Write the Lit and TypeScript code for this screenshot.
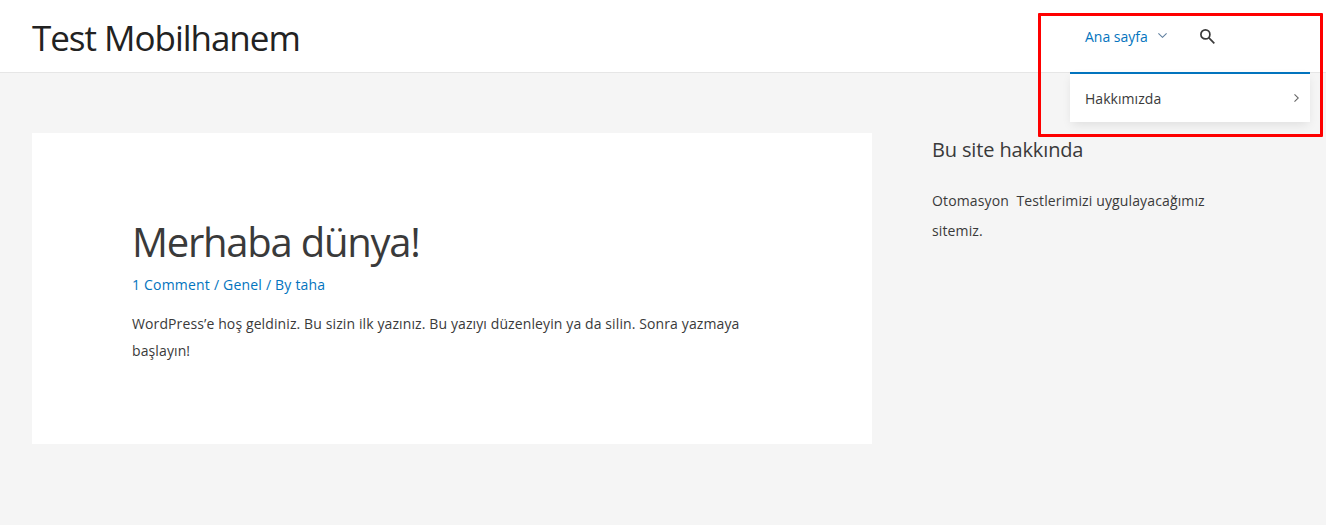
import { LitElement, html, css } from "lit";
import { customElement } from "lit/decorators.js";

@customElement("app-root")
export class AppRoot extends LitElement {
  static styles = css`
    :host { display: block; width: 1326px; height: 525px; position: relative; overflow: hidden; background: #f5f5f5; font-family: "Open Sans", "Noto Sans", sans-serif; color: #3a3a3a; }
    a { color: #0274be; text-decoration: none; }
    .header { height: 72px; background: #fff; border-bottom: 1px solid #e6e6e6; display: flex; justify-content: space-between; padding: 0 16px 0 32px; position: relative; }
    .title { font-size: 35px; line-height: 76px; color: #222; letter-spacing: -1.03px; }
    .nav { display: flex; width: 240px; height: 72px; position: relative; }
    .menu { width: 240px; position: relative; }
    .home { display: flex; align-items: center; gap: 10px; padding-left: 15px; height: 72px; box-sizing: border-box; font-size: 14px; letter-spacing: 0; }
    .home svg { margin-top: -1px; }
    .search { position: absolute; left: 130px; top: 29px; line-height: 0; }
    .dropdown { position: absolute; left: 0; top: 72px; width: 240px; height: 50px; box-sizing: border-box; background: #fff; border-top: 2px solid #0274be; box-shadow: 0 4px 10px -2px rgba(0,0,0,.1); display: flex; align-items: center; justify-content: space-between; padding: 0 11px 0 15px; font-size: 14px; letter-spacing: 0.05px; z-index: 2; }
    .main { display: flex; padding: 60px 0 0 32px; gap: 60px; }
    .card { width: 840px; height: 311px; background: #fff; box-sizing: border-box; padding: 83px 100px 0 100px; }
    h1 { margin: 0; font-weight: 400; font-size: 40px; line-height: 52px; letter-spacing: -1.24px; color: #3a3a3a; }
    .meta { font-size: 14px; line-height: 20px; margin-top: 7px; letter-spacing: 0.2px; color: #0274be; }
    .body { font-size: 14px; line-height: 27px; margin-top: 15px; letter-spacing: 0.11px; width: 640px; }
    .side { width: 300px; }
    h2 { margin: 4px 0 0; font-weight: 400; font-size: 20px; line-height: 26px; letter-spacing: -0.14px; color: #3a3a3a; }
    .side p { margin: 23px 0 0; font-size: 14px; line-height: 30px; width: 290px; letter-spacing: 0.13px; white-space: pre-wrap; }
    .mark { position: absolute; left: 1038px; top: 13px; width: 285px; height: 124px; box-sizing: border-box; border: 3px solid #fe0000; border-radius: 1px; pointer-events: none; z-index: 5; }
  `;

  render() {
    return html`
      <div class="header">
        <div class="title">Test Mobilhanem</div>
        <div class="nav">
          <div class="menu">
            <a class="home">Ana sayfa<svg width="9" height="5" viewBox="0 0 9 5" fill="none" stroke="#5f7f9f" stroke-width="1.100"><path d="M.4.400 4.500 4.300 8.600.400"/></svg></a>
            <div class="search">
              <svg width="15" height="15" viewBox="0 0 15 15" fill="none" stroke="#3a3a3a" stroke-width="1.700"><circle cx="5.400" cy="5.400" r="4.500"/><path d="m8.700 8.700 5.600 5.600"/></svg>
            </div>
            <div class="dropdown">
              <span>Hakkımızda</span>
              <svg width="5" height="8" viewBox="0 0 5 8" fill="none" stroke="#666" stroke-width="1.100"><path d="m.5.400 3.800 3.600-3.800 3.600"/></svg>
            </div>
          </div>
        </div>
      </div>
      <div class="main">
        <div class="card">
          <h1>Merhaba dünya!</h1>
          <div class="meta"><a>1 Comment</a> / <a>Genel</a> / By <a>taha</a></div>
          <div class="body">WordPress’e hoş geldiniz. Bu sizin ilk yazınız. Bu yazıyı düzenleyin ya da silin. Sonra yazmaya başlayın!</div>
        </div>
        <div class="side">
          <h2>Bu site hakkında</h2>
          <p>Otomasyon  Testlerimizi uygulayacağımız sitemiz.</p>
        </div>
      </div>
      <div class="mark"></div>
    `;
  }
}
